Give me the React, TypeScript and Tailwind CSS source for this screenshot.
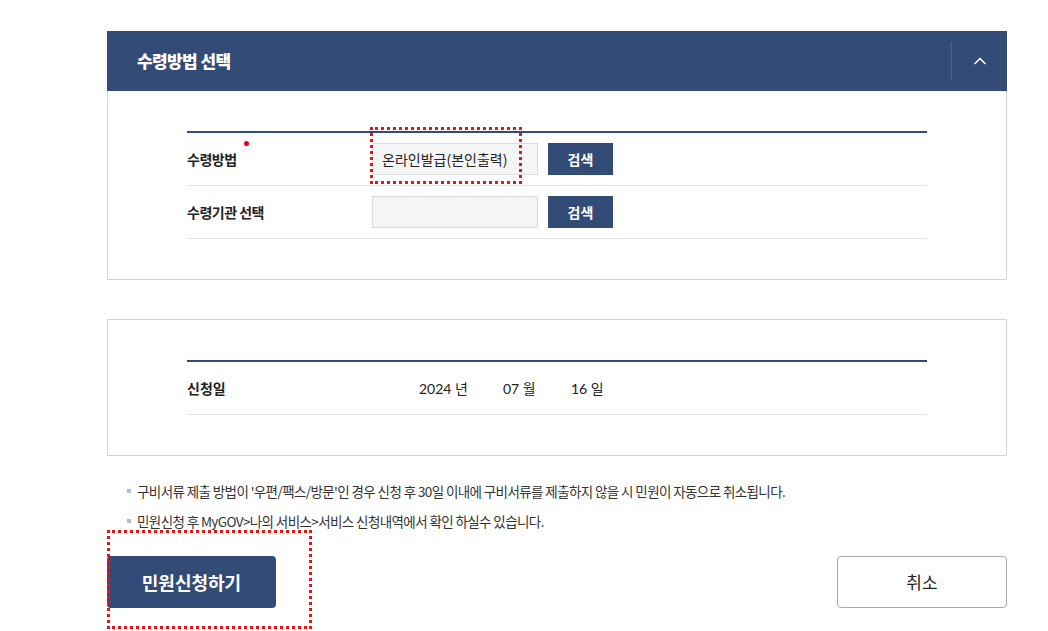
import { ChevronUp } from 'lucide-react';

const font = { fontFamily: '"Noto Sans CJK KR", "Noto Sans", sans-serif' };

function Row({ label, required, children }: { label: string; required?: boolean; children: React.ReactNode }) {
  return (
    <div className="flex items-center h-[53px] border-b border-[#e5e5e5]">
      <div className="w-[185px] relative text-[14px] font-bold text-[#222] tracking-[-0.5px]">
        {label}
        {required && <span className="absolute left-[57px] top-[-8px] w-[5px] h-[5px] rounded-full bg-[#e60012]" />}
      </div>
      {children}
    </div>
  );
}

function SearchField({ value, annotated }: { value?: string; annotated?: boolean }) {
  return (
    <div className="flex items-center gap-[10px] relative">
      <div className="w-[166px] h-[32px] bg-[#f5f5f5] border border-[#dcdcdc] flex items-center px-[9px] text-[14px] text-[#222]">
        {value}
      </div>
      <button className="w-[65px] h-[32px] bg-[#334b77] text-white text-[14px] font-bold">검색</button>
      {annotated && (
        <span className="absolute left-[-2px] top-[-16px] w-[152px] h-[57px] border-[3px] border-dotted border-[#ee1111] pointer-events-none" />
      )}
    </div>
  );
}

export default function App() {
  return (
    <div className="w-[1048px] h-[631px] bg-white overflow-hidden" style={font}>
      <div className="ml-[107px] w-[900px] pt-[31px]">
        <div className="h-[60px] bg-[#334b77] flex items-center justify-between">
          <h2 className="pl-[30px] text-[17px] font-extrabold text-white tracking-[-0.6px]">수령방법 선택</h2>
          <div className="flex items-center h-full">
            <span className="w-px h-[38px] bg-[#4b6290]" />
            <span className="w-[55px] flex justify-center">
              <ChevronUp size={20} strokeWidth={2} className="text-white" />
            </span>
          </div>
        </div>
        <div className="h-[189px] border border-t-0 border-[#d5d5d5] pt-[40px] px-[79px]">
          <div className="border-t-2 border-[#334b77]">
            <Row label="수령방법" required>
              <SearchField value="온라인발급(본인출력)" annotated />
            </Row>
            <Row label="수령기관 선택">
              <SearchField />
            </Row>
          </div>
        </div>

        <div className="mt-[39px] h-[137px] border border-[#d5d5d5] pt-[40px] px-[79px]">
          <div className="border-t-2 border-[#334b77]">
            <div className="flex items-center h-[53px] border-b border-[#e5e5e5] text-[14px]">
              <div className="w-[232px] font-bold text-[#222]">신청일</div>
              <div className="flex text-[#222]" style={{ fontFamily: 'Lato, "Noto Sans CJK KR", sans-serif' }}>
                <span className="w-[84px]">2024 년</span>
                <span className="w-[68px]">07 월</span>
                <span>16 일</span>
              </div>
            </div>
          </div>
        </div>

        <ul className="mt-[26px] pl-[20px] text-[13.5px] leading-[18px] text-[#333] tracking-[-0.6px] space-y-[12px]">
          <li className="flex items-center gap-[6px]">
            <span className="w-[4px] h-[4px] bg-[#bbb]" />
            구비서류 제출 방법이 '우편/팩스/방문'인 경우 신청 후 30일 이내에 구비서류를 제출하지 않을 시 민원이 자동으로 취소됩니다.
          </li>
          <li className="flex items-center gap-[6px]">
            <span className="w-[4px] h-[4px] bg-[#bbb]" />
            민원신청 후 MyGOV&gt;나의 서비스&gt;서비스 신청내역에서 확인 하실수 있습니다.
          </li>
        </ul>

        <div className="mt-[26px] flex justify-between">
          <div className="relative">
            <button className="w-[169px] h-[52px] rounded-[4px] bg-[#334b77] text-white text-[18px] font-bold">민원신청하기</button>
            <span className="absolute left-0 top-[-26px] w-[205px] h-[99px] border-[3px] border-dotted border-[#ee1111] pointer-events-none" />
          </div>
          <button className="w-[170px] h-[52px] rounded-[4px] bg-white border border-[#aaa] text-[#222] text-[17px]">취소</button>
        </div>
      </div>
    </div>
  );
}
